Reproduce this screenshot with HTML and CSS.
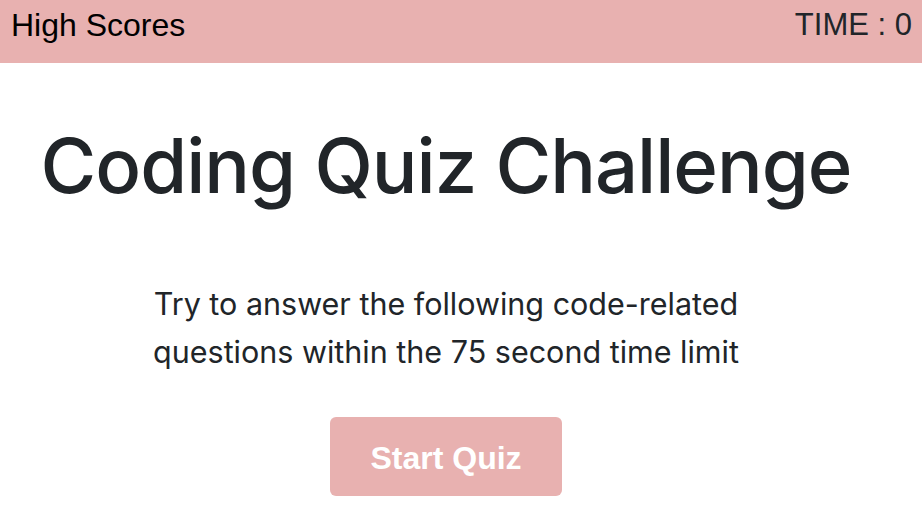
FILE: index.html
```html
<!DOCTYPE html>
<html>
<head>
<meta charset="utf-8">
<link rel="stylesheet" href="styles.css">
</head>
<body>
<header class="topbar">
  <a class="high-scores">High Scores</a>
  <div class="timer">TIME : 0</div>
</header>
<main class="content">
  <h1 class="title">Coding Quiz Challenge</h1>
  <p class="intro">Try to answer the following code-related<br>questions within the 75 second time limit</p>
  <button class="start-btn">Start Quiz</button>
</main>
</body>
</html>
```
FILE: styles.css
```css
html, body {
  margin: 0;
  padding: 0;
  background: #ffffff;
}
body {
  width: 922px;
  overflow: hidden;
}
.topbar {
  height: 63px;
  background: #e8b1b0;
  display: flex;
  justify-content: space-between;
  align-items: flex-start;
  padding: 0 10px 0 11px;
  box-sizing: border-box;
}
.high-scores {
  font-family: "Liberation Sans", Arial, sans-serif;
  font-size: 32px;
  line-height: 50px;
  color: #000;
}
.timer {
  font-family: "Liberation Sans", Arial, sans-serif;
  font-size: 31px;
  line-height: 50px;
  color: #212529;
}
.content {
  width: 892px;
  display: flex;
  flex-direction: column;
  align-items: center;
  font-family: Inter, "Noto Sans", sans-serif;
  color: #212529;
}
.title {
  margin: 55px 0 0;
  font-size: 76px;
  font-weight: 500;
  letter-spacing: -1px;
  line-height: 94px;
}
.intro {
  margin: 68px 0 0;
  font-size: 30.5px;
  line-height: 48px;
  text-align: center;
}
.start-btn {
  margin-top: 41px;
  width: 232px;
  height: 79px;
  border: none;
  border-radius: 6px;
  background: #e8b1b0;
  color: #fff;
  font-family: "Liberation Sans", Arial, sans-serif;
  font-weight: bold;
  font-size: 32px;
  padding: 4px 0 0;
}
```
